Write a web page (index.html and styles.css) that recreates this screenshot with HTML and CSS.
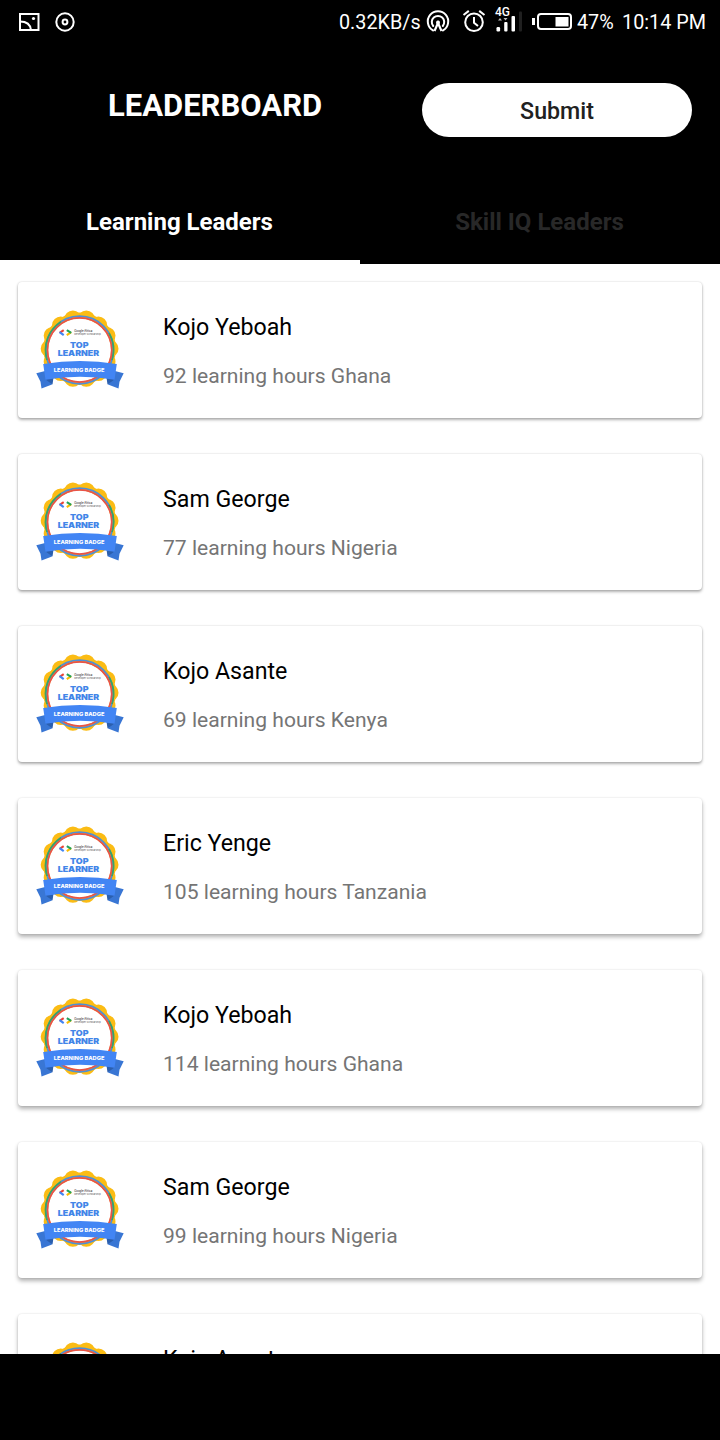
FILE: index.html
```html
<!DOCTYPE html>
<html lang="en">
<head>
<meta charset="utf-8">
<title>Leaderboard</title>
<link rel="stylesheet" href="styles.css">
</head>
<body>
<svg class="defs" aria-hidden="true">
  <defs>
    <symbol id="badge" viewBox="0 0 100 100">
      <circle cx="49.6" cy="48.7" r="36.3" fill="#fbbc14"/>
      <circle cx="49.6" cy="48.7" r="30.2" fill="none" stroke="#fbbc14" stroke-width="17.4" stroke-linecap="round" pathLength="14" stroke-dasharray="0 1"/>
      <circle cx="49.6" cy="50" r="31.5" fill="#fff"/>
      <g fill="none" stroke-width="1.8">
        <circle cx="49.6" cy="50" r="33.8" stroke="#4e8fd6"/>
        <path d="M31 21.8A33.8 33.8 0 0 0 17 60" stroke="#38a367"/>
        <path d="M79 33A33.8 33.8 0 0 1 82 60" stroke="#38a367"/>
        <circle cx="49.6" cy="50" r="32.1" stroke="#e8524a" stroke-width="1.7"/>
      </g>
      <g fill="none" stroke-width="2.1">
        <path d="M33.7 30.1L29.6 32.9" stroke="#ea4335"/>
        <path d="M29.6 32.1L33.7 35.2" stroke="#4285f4"/>
        <path d="M41.2 32.1L36.8 35.2" stroke="#fbbc04"/>
        <path d="M36.8 30.1L41.2 32.9" stroke="#21a35b"/>
      </g>
      <g font-family="Inter, Roboto, sans-serif">
        <text x="44.2" y="32.2" font-size="3" font-weight="500" fill="#333" textLength="18" lengthAdjust="spacingAndGlyphs">Google Africa</text>
        <text x="44.2" y="35.4" font-size="2.7" fill="#555" textLength="26.5" lengthAdjust="spacingAndGlyphs">Developer Scholarship</text>
        <g font-weight="900" fill="#4285e8">
          <text x="40" y="48.2" font-size="7.9" textLength="18.5" lengthAdjust="spacingAndGlyphs">TOP</text>
          <text x="27.7" y="56.3" font-size="7.9" textLength="41.5" lengthAdjust="spacingAndGlyphs">LEARNER</text>
        </g>
        <path d="M6.3 73.3L19 70 22 84.5 11.5 88.5 10.5 81.8Z M93.7 73.3L81 70 78 84.5 88.5 88.5 89.5 81.8Z" fill="#3976d4"/>
        <path d="M15.5 79.5L23.5 77.6 22.5 84.5Z M84.5 79.5L76.5 77.6 77.5 84.5Z" fill="#2b5fae"/>
        <path d="M13.2 64Q50 58 86.8 64L84.5 79.7Q50 74 15.5 79.7Z" fill="#4285f4"/>
        <text x="23.8" y="71.5" font-size="5" font-weight="800" fill="#fff" textLength="50.6" lengthAdjust="spacingAndGlyphs">LEARNING BADGE</text>
      </g>
    </symbol>
  </defs>
</svg>
<div class="screen">
  <div class="statusbar">
    <svg class="sys-left" width="60" height="24" viewBox="18 10 60 24" fill="none" stroke="#fff" stroke-width="2">
      <rect x="20" y="14" width="18.5" height="16"/>
      <path d="M20 21.5Q30 21.5 31 30"/>
      <circle cx="33.5" cy="18.5" r="1.6" fill="#fff" stroke="none"/>
      <circle cx="65" cy="22" r="8.7"/>
      <circle cx="65" cy="22" r="2.4"/>
    </svg>
    <span class="speed">0.32KB/s</span>
    <svg class="sys-mid" width="150" height="36" viewBox="424 2 150 36" fill="none" stroke="#fff" stroke-width="2">
      <path d="M433 30.4A10.2 10.2 0 1 1 443 30.4" stroke-linecap="round"/>
      <path d="M433.2 26A6.2 6.2 0 1 1 442.8 26" stroke-linecap="round"/>
      <path d="M434.5 31L438 23L441.5 31" stroke-width="2.2"/>
      <circle cx="438" cy="22.4" r="2" fill="#fff" stroke="none"/>
      <circle cx="474" cy="22.3" r="8.8"/>
      <path d="M474 17V22.7L478 26M463.5 15L468.8 10.9M479.2 10.9L484.5 15"/>
      <text x="495" y="16" font-family="Roboto, sans-serif" font-size="12" font-weight="500" fill="#fff" stroke="none">4G</text>
      <path d="M498 20.5L500 18L502 20.5Z M503.5 18H507.5L505.5 20.5Z" fill="#bbb" stroke="none"/>
      <g fill="#fff" stroke="none">
        <rect x="496.5" y="27" width="3.6" height="4.5" rx="1.2"/>
        <rect x="504.2" y="22" width="3.3" height="9.5" rx="1"/>
        <rect x="511.5" y="16" width="3.5" height="15.5" rx="1"/>
        <rect x="519" y="11.5" width="3" height="20" rx="1" fill="#202020"/>
        <rect x="532" y="18" width="3" height="7"/>
        <rect x="555.5" y="17" width="13" height="9.5"/>
      </g>
      <rect x="538" y="14" width="33" height="15" rx="3"/>
    </svg>
    <span class="percent">47%</span>
    <span class="clock">10:14 PM</span>
  </div>
  <header class="header">
    <h1 class="title">LEADERBOARD</h1>
    <button class="submit">Submit</button>
  </header>
  <nav class="tabs">
    <div class="tab tab-active">Learning Leaders</div>
    <div class="tab">Skill IQ Leaders</div>
  </nav>
  <main class="list">
    <article class="card"><svg class="badge"><use href="#badge"/></svg><div class="info"><div class="name">Kojo Yeboah</div><div class="detail">92 learning hours Ghana</div></div></article>
    <article class="card"><svg class="badge"><use href="#badge"/></svg><div class="info"><div class="name">Sam George</div><div class="detail">77 learning hours Nigeria</div></div></article>
    <article class="card"><svg class="badge"><use href="#badge"/></svg><div class="info"><div class="name">Kojo Asante</div><div class="detail">69 learning hours Kenya</div></div></article>
    <article class="card"><svg class="badge"><use href="#badge"/></svg><div class="info"><div class="name">Eric Yenge</div><div class="detail">105 learning hours Tanzania</div></div></article>
    <article class="card"><svg class="badge"><use href="#badge"/></svg><div class="info"><div class="name">Kojo Yeboah</div><div class="detail">114 learning hours Ghana</div></div></article>
    <article class="card"><svg class="badge"><use href="#badge"/></svg><div class="info"><div class="name">Sam George</div><div class="detail">99 learning hours Nigeria</div></div></article>
    <article class="card"><svg class="badge"><use href="#badge"/></svg><div class="info"><div class="name">Kojo Asante</div></div></article>
  </main>
  <footer class="navbar"></footer>
</div>
</body>
</html>
```
FILE: styles.css
```css
* { box-sizing: border-box; }
body { margin: 0; background: #000; font-family: Roboto, sans-serif; }
.defs { display: block; width: 0; height: 0; }
.screen { display: flex; flex-direction: column; width: 720px; height: 1440px; overflow: hidden; background: #000; }
.statusbar { display: flex; align-items: center; height: 44px; padding: 0 14px 0 18px; color: #fff; font-size: 19.8px; white-space: nowrap; }
.sys-left, .sys-mid { flex: none; display: block; }
.sys-mid { margin-top: -4px; }
.speed { flex: none; width: 85px; margin-left: 261px; }
.percent { width: 44px; margin-left: 3px; }
.clock { margin-left: auto; }
.header { display: flex; align-items: flex-start; height: 136px; padding: 39px 28px 0 108px; }
.title { width: 314px; margin: 5px 0 0; color: #fff; font-size: 31px; line-height: 36px; font-weight: 700; }
.submit { width: 270px; height: 54px; padding: 2px 0 0; border: 0; border-radius: 27px; background: #fff; color: #212121; font: 500 23.2px Roboto, sans-serif; }
.tabs { display: flex; height: 84px; }
.tab { flex: 1; padding-right: 1px; border-bottom: 4px solid #000; color: #282828; font-size: 24px; font-weight: 700; line-height: 84px; text-align: center; }
.tab-active { border-color: #fff; color: #fff; }
.list { display: flex; flex-direction: column; gap: 36px; height: 1090px; padding: 18px 18px 0; overflow: hidden; background: #fff; }
.card { display: flex; flex: none; height: 136px; padding-left: 12px; border-radius: 4px; background: #fff; box-shadow: 0 0 2px rgba(0, 0, 0, .18), 0 2px 3px rgba(0, 0, 0, .3); }
.card:nth-child(n+4) { box-shadow: 0 0 2px rgba(0, 0, 0, .12), 0 3px 4px rgba(0, 0, 0, .3); }
.badge { flex: none; width: 100px; height: 100px; margin-top: 18px; }
.info { padding: 31px 0 0 33px; white-space: nowrap; }
.name { color: #000; font-size: 23.2px; line-height: 28px; }
.detail { margin-top: 22px; color: #757575; font-size: 21.08px; line-height: 26px; }
.navbar { flex: 1; background: #000; }
```
